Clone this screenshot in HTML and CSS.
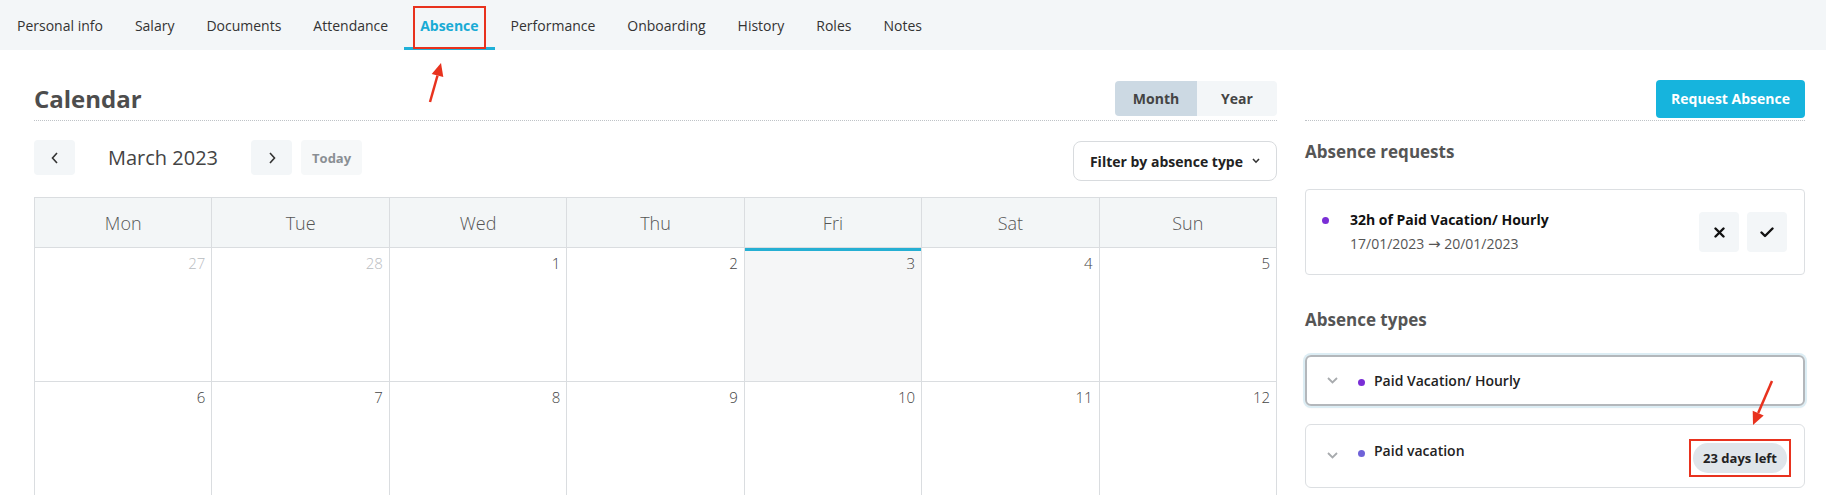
FILE: index.html
```html
<!DOCTYPE html>
<html lang="en">
<head>
    <meta charset="UTF-8">
    <meta name="viewport" content="width=device-width, initial-scale=1.0">
    <title>Absence</title>
    <link rel="stylesheet" href="styles.css">
</head>
<body>
    <nav class="tabs">
        <a class="tab">Personal info</a>
        <a class="tab">Salary</a>
        <a class="tab">Documents</a>
        <a class="tab">Attendance</a>
        <a class="tab active">Absence</a>
        <a class="tab">Performance</a>
        <a class="tab">Onboarding</a>
        <a class="tab">History</a>
        <a class="tab">Roles</a>
        <a class="tab">Notes</a>
    </nav>

    <main class="page">
        <section class="calendar">
            <div class="section-head">
                <h1>Calendar</h1>
                <div class="view-switch">
                    <button class="on">Month</button>
                    <button>Year</button>
                </div>
            </div>

            <div class="toolbar">
                <div class="month-nav">
                    <button class="nav-btn">
                        <svg width="8" height="12" viewBox="0 0 8 12"><polyline points="6,1 1.5,6 6,11" fill="none" stroke="#333" stroke-width="1.6"/></svg>
                    </button>
                    <span class="month-label">March 2023</span>
                    <button class="nav-btn">
                        <svg width="8" height="12" viewBox="0 0 8 12"><polyline points="2,1 6.5,6 2,11" fill="none" stroke="#333" stroke-width="1.6"/></svg>
                    </button>
                    <button class="today-btn">Today</button>
                </div>
                <button class="filter-btn">
                    Filter by absence type
                    <svg width="8" height="6" viewBox="0 0 8 6"><polyline points="1,1 4,4.2 7,1" fill="none" stroke="#333" stroke-width="1.6"/></svg>
                </button>
            </div>

            <div class="month-grid">
                <div class="day-name">Mon</div>
                <div class="day-name">Tue</div>
                <div class="day-name">Wed</div>
                <div class="day-name">Thu</div>
                <div class="day-name">Fri</div>
                <div class="day-name">Sat</div>
                <div class="day-name">Sun</div>

                <div class="day muted">27</div>
                <div class="day muted">28</div>
                <div class="day">1</div>
                <div class="day">2</div>
                <div class="day today">3</div>
                <div class="day">4</div>
                <div class="day">5</div>

                <div class="day">6</div>
                <div class="day">7</div>
                <div class="day">8</div>
                <div class="day">9</div>
                <div class="day">10</div>
                <div class="day">11</div>
                <div class="day">12</div>
            </div>
        </section>

        <aside class="side">
            <div class="section-head side-head">
                <button class="request-btn">Request Absence</button>
            </div>

            <h2>Absence requests</h2>
            <div class="request-card">
                <div class="req-main">
                    <span class="dot"></span>
                    <div>
                        <div class="req-title">32h of Paid Vacation/ Hourly</div>
                        <div class="req-dates">17/01/2023 <span class="to">→</span> 20/01/2023</div>
                    </div>
                </div>
                <div class="req-actions">
                    <button class="icon-btn">
                        <svg width="11" height="11" viewBox="0 0 11 11"><path d="M1.5 1.5l8 8M9.5 1.5l-8 8" stroke="#111" stroke-width="2.4" stroke-linecap="round"/></svg>
                    </button>
                    <button class="icon-btn">
                        <svg width="14" height="11" viewBox="0 0 14 11"><polyline points="1.5,5.5 5,9 12.5,1.5" fill="none" stroke="#111" stroke-width="2.4" stroke-linecap="round" stroke-linejoin="round"/></svg>
                    </button>
                </div>
            </div>

            <h2 class="types-title">Absence types</h2>
            <div class="type-card focused">
                <svg class="chev" width="11" height="7" viewBox="0 0 11 7"><polyline points="1,1 5.5,5.5 10,1" fill="none" stroke="#a8abae" stroke-width="1.8"/></svg>
                <span class="dot"></span>
                <span class="type-name">Paid Vacation/ Hourly</span>
            </div>
            <div class="type-card">
                <svg class="chev low" width="11" height="7" viewBox="0 0 11 7"><polyline points="1,1 5.5,5.5 10,1" fill="none" stroke="#a8abae" stroke-width="1.8"/></svg>
                <span class="dot soft"></span>
                <span class="type-name">Paid vacation</span>
                <span class="marked">
                    <span class="days-left">23 days left</span>
                </span>
            </div>
        </aside>
    </main>

    <!-- pointer arrows drawn on top of the page -->
    <svg class="arrows" width="1826" height="495" viewBox="0 0 1826 495">
        <line x1="430" y1="102" x2="437.5" y2="75.5" stroke="#e8321e" stroke-width="2.5"/>
        <polygon points="441,63 443.3,77.1 431.7,73.9" fill="#e8321e"/>
        <line x1="1772" y1="381" x2="1758.2" y2="413.1" stroke="#e8321e" stroke-width="2.5"/>
        <polygon points="1753,425 1763.7,415.5 1752.7,410.7" fill="#e8321e"/>
    </svg>
</body>
</html>
```

FILE: styles.css
```css
body {
    margin: 0;
    width: 1826px;
    height: 495px;
    overflow: hidden;
    position: relative;
    font-family: "Open Sans", "Liberation Sans", sans-serif;
    color: #333;
    background: #fff;
}

button {
    font-family: inherit;
    cursor: pointer;
}

/* top tabs */
.tabs {
    display: flex;
    height: 50px;
    padding-left: 1px;
    background: #f3f6f8;
}

.tab {
    position: relative;
    display: flex;
    align-items: center;
    padding: 0 16px;
    font-size: 14px;
    color: #333;
}

.tab.active {
    color: #19abd5;
    font-weight: 700;
}

.tab.active::before {
    content: "";
    position: absolute;
    left: 0;
    right: 0;
    bottom: 0;
    height: 3px;
    background: #1fb0d8;
}

.tab.active::after {
    content: "";
    position: absolute;
    top: 6px;
    bottom: 1px;
    left: 9px;
    right: 9px;
    border: 2px solid #e8321e;
}

.page {
    display: grid;
    grid-template-columns: 1fr 500px;
    column-gap: 28px;
    padding: 27px 21px 0 34px;
}

.section-head {
    height: 43px;
    display: flex;
    align-items: center;
    justify-content: space-between;
    border-bottom: 1px dotted #bfc3c7;
}

h1 {
    margin: 0;
    font-size: 24px;
    font-weight: 700;
    color: #4d4d4d;
}

.view-switch {
    display: flex;
    border-radius: 4px;
    overflow: hidden;
}

.view-switch button {
    width: 80px;
    height: 35px;
    border: 0;
    background: #f3f6f8;
    font-size: 14px;
    font-weight: 700;
    color: #444;
}

.view-switch button.on {
    width: 82px;
    background: #ccd9e3;
}

.toolbar {
    display: flex;
    justify-content: space-between;
    align-items: flex-start;
    padding-top: 19px;
    margin-bottom: 16px;
}

.month-nav {
    display: flex;
    align-items: center;
}

.nav-btn {
    width: 41px;
    height: 35px;
    border: 0;
    border-radius: 4px;
    background: #f3f6f8;
    display: flex;
    align-items: center;
    justify-content: center;
}

.month-label {
    margin: 0 33px;
    font-size: 20px;
    color: #444;
}

.today-btn {
    margin-left: 9px;
    height: 35px;
    padding: 0 11px;
    border: 0;
    border-radius: 4px;
    background: #f6f8f9;
    font-size: 13px;
    font-weight: 700;
    color: #8a8f94;
}

.filter-btn {
    margin-top: 1px;
    height: 40px;
    padding: 0 16px;
    display: flex;
    align-items: center;
    gap: 9px;
    border: 1px solid #d8dbde;
    border-radius: 8px;
    background: #fff;
    font-size: 14px;
    font-weight: 700;
    color: #222;
}

/* month grid */
.month-grid {
    display: grid;
    grid-template-columns: repeat(7, 1fr);
    grid-template-rows: 50px 134px 134px;
    border-left: 1px solid #dadde0;
    border-top: 1px solid #dadde0;
}

.month-grid > div {
    box-sizing: border-box;
    border-right: 1px solid #dadde0;
    border-bottom: 1px solid #dadde0;
}

.day-name {
    display: flex;
    align-items: center;
    justify-content: center;
    background: #f3f6f7;
    font-size: 18px;
    font-weight: 300;
    color: #555;
}

.day {
    padding: 5px 6px;
    text-align: right;
    font-size: 15px;
    line-height: 20px;
    font-weight: 300;
    color: #444;
}

.day.muted {
    color: #b9bcbf;
}

.day.today {
    background: #f5f6f7;
    box-shadow: inset 0 3px 0 #25afd3;
}

/* right column */
.side-head {
    justify-content: flex-end;
}

.request-btn {
    height: 38px;
    padding: 0 15px;
    border: 0;
    border-radius: 4px;
    background: #16b4dd;
    color: #fff;
    font-size: 14px;
    font-weight: 700;
}

h2 {
    margin: 19px 0 25px;
    font-size: 17px;
    line-height: 24px;
    font-weight: 700;
    color: #555;
}

h2.types-title {
    margin: 33px 0 23px;
}

.dot {
    flex: none;
    width: 7px;
    height: 7px;
    border-radius: 50%;
    background: #7a2ed6;
}

.dot.soft {
    background: #6f62d8;
}

.request-card {
    box-sizing: border-box;
    height: 86px;
    display: flex;
    align-items: center;
    justify-content: space-between;
    padding: 0 17px 0 16px;
    border: 1px solid #dcdfe2;
    border-radius: 4px;
}

.req-main {
    display: flex;
    align-items: flex-start;
    gap: 21px;
}

.req-main .dot {
    margin-top: 9px;
}

.req-title {
    font-size: 14px;
    line-height: 24px;
    font-weight: 700;
    color: #111;
}

.req-dates {
    font-size: 14px;
    line-height: 24px;
    color: #555;
}

.req-dates .to {
    font-family: "DejaVu Sans", sans-serif;
    font-size: 15px;
}

.req-actions {
    display: flex;
    gap: 8px;
}

.icon-btn {
    width: 40px;
    height: 40px;
    border: 0;
    border-radius: 4px;
    background: #f3f6f8;
    display: flex;
    align-items: center;
    justify-content: center;
}

.type-card {
    display: flex;
    align-items: flex-start;
    margin-bottom: 18px;
    padding: 14px 13px 10px 21px;
    border: 1px solid #dcdfe2;
    border-radius: 6px;
}

.type-card.focused {
    padding: 12px 13px 11px 20px;
    border: 2px solid #b3b7bb;
    box-shadow: 0 0 0 2px #dcedf4, 0 1px 3px rgba(0, 0, 0, 0.12);
}

.chev {
    margin-top: 8px;
}

.chev.low {
    margin-top: 13px;
}

.type-card .dot {
    margin: 10px 9px 0 20px;
}

.type-card .dot.soft {
    margin-top: 11px;
}

.type-name {
    font-size: 14px;
    line-height: 24px;
    font-weight: 600;
    color: #222;
}

.marked {
    margin-left: auto;
    padding: 2px;
    border: 2px solid #e8321e;
}

.days-left {
    display: block;
    height: 30px;
    line-height: 30px;
    padding: 0 10px;
    border-radius: 15px;
    background: #dfe5ea;
    font-size: 13px;
    font-weight: 700;
    color: #222;
}

.arrows {
    position: absolute;
    top: 0;
    left: 0;
    pointer-events: none;
}
```
